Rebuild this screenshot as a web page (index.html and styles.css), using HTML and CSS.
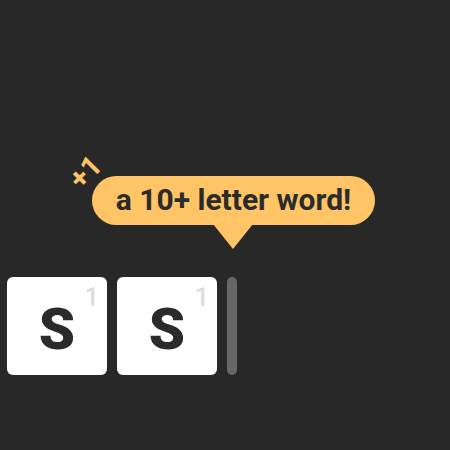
FILE: index.html
```html
<!DOCTYPE html>
<html>
<head>
<meta charset="utf-8">
<link rel="stylesheet" href="styles.css">
</head>
<body>
<div class="board">
  <div class="row">
    <div class="tile"><span class="letter">S</span><span class="score">1</span></div>
    <div class="tile"><span class="letter">S</span><span class="score">1</span></div>
    <div class="cursor"></div>
  </div>
  <div class="bubble">a 10+ letter word!</div>
  <div class="plus">+1</div>
</div>
</body>
</html>
```
FILE: styles.css
```css
html, body {
  margin: 0;
  padding: 0;
  background: #282828;
  width: 450px;
  height: 450px;
  overflow: hidden;
  font-family: Roboto, "Liberation Sans", sans-serif;
}
.board {
  position: relative;
  width: 450px;
  height: 450px;
}
.row {
  display: flex;
  gap: 10px;
  padding: 277px 0 0 7px;
}
.tile {
  position: relative;
  width: 100px;
  height: 98px;
  background: #fff;
  border-radius: 6px;
  display: flex;
  align-items: center;
  justify-content: center;
}
.letter {
  font-weight: 900;
  font-size: 58px;
  color: #2b2b2b;
  margin-top: 6px;
}
.score {
  position: absolute;
  top: 6px;
  right: 8px;
  font-size: 25px;
  color: #dcdcdc;
  font-weight: 500;
}
.cursor {
  width: 10px;
  height: 98px;
  background: #666;
  border-radius: 5px;
}
.bubble {
  position: absolute;
  left: 92px;
  top: 176px;
  width: 283px;
  height: 49px;
  box-sizing: border-box;
  background: #ffc466;
  border-radius: 25px;
  color: #2b2b2b;
  font-weight: 700;
  font-size: 30px;
  display: flex;
  align-items: center;
  justify-content: center;
  padding-bottom: 2px;
}
.bubble::after {
  content: "";
  position: absolute;
  left: 121px;
  top: 48px;
  border-left: 20px solid transparent;
  border-right: 20px solid transparent;
  border-top: 25px solid #ffc466;
}
.plus {
  position: absolute;
  left: 69px;
  top: 155px;
  font-size: 29px;
  font-weight: 700;
  color: #ffc466;
  transform: rotate(-45deg);
}
```
